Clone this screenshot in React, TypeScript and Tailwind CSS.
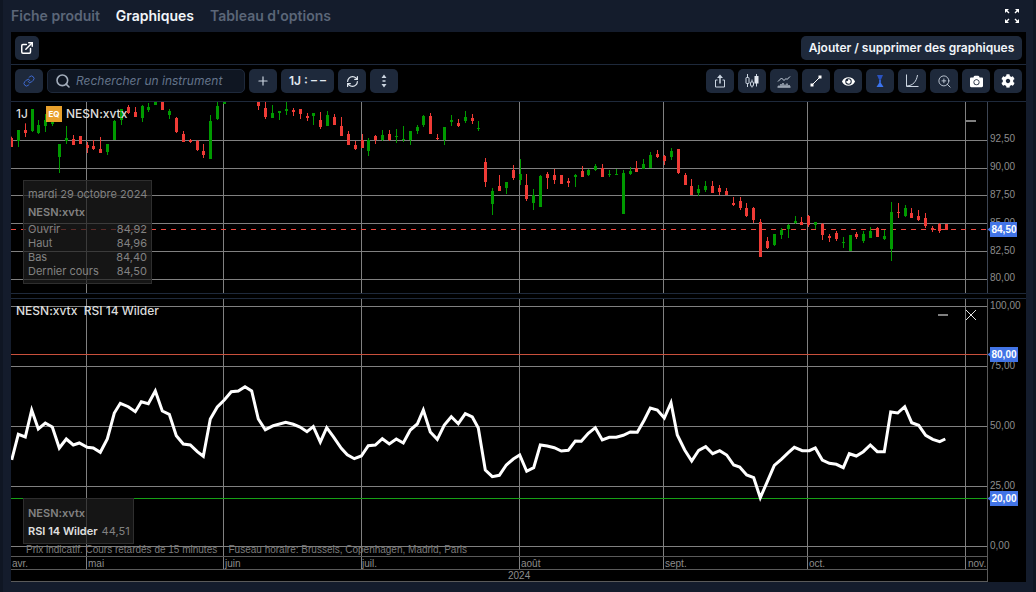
import type { ReactNode } from "react";
import { ExternalLink, Link, Search, Plus, RefreshCw, ZoomIn } from "lucide-react";
import { FaEye, FaCog, FaCamera } from "react-icons/fa";

type C = [number, number, number, number, number, string];
type G = { ox: number; oy: number; items: C[] };

const groups: G[] = [
  { ox: 0, oy: 100, items: [
    [35,110,141,113,141,"r"],[55,90,141,90,123,"g"],[76,70,111,90,99,"r"],[97,27,96,27,93,"g"],[115,60,102,75,99,"g"],[136,42,96,60,78,"g"],[157,57,78,66,72,"g"],[178,132,219,132,171,"g"],[199,78,132,114,123,"g"],[220,105,135,117,135,"r"],[241,108,132,108,132,"r"],[262,126,159,135,144,"r"],[280,120,150,138,147,"r"],[301,111,159,147,159,"r"],[322,132,165,132,156,"g"],[343,60,120,63,120,"g"],[364,27,75,27,60,"g"],[385,15,42,21,39,"r"],[406,21,51,36,51,"r"],[427,15,66,18,54,"g"],[445,9,36,21,30,"g"],[466,6,15,6,15,"g"],[487,6,30,6,30,"r"],[508,27,57,33,45,"g"],[529,51,99,54,96,"r"],[550,93,126,102,126,"r"],[571,117,129,120,126,"r"],[592,120,153,123,150,"r"],[610,132,174,153,165,"r"],[631,45,177,63,177,"g"],[652,6,60,18,57,"g"],[673,6,12,6,12,"g"],[775,6,30,6,18,"r"],
  ]},
  { ox: 260, oy: 95, items: [
    [16,21,72,40,66,"r"],[37,30,69,54,69,"g"],[58,48,75,48,54,"g"],[79,21,60,42,48,"g"],[100,39,63,45,51,"r"],[121,42,72,42,57,"r"],[142,54,78,63,69,"r"],[160,54,90,54,63,"g"],[181,51,102,75,96,"r"],[202,48,93,60,93,"g"],[223,57,90,66,90,"r"],[244,66,123,93,123,"r"],[265,108,150,117,150,"r"],[286,138,165,150,162,"r"],[307,117,159,135,159,"r"],[325,129,183,135,168,"g"],[346,120,147,123,136,"r"],[367,105,138,120,136,"g"],[388,105,138,117,136,"r"],[409,102,144,123,126,"g"],[430,93,141,132,136,"g"],[451,108,150,108,136,"g"],[472,90,117,96,108,"g"],[490,60,96,63,90,"g"],[511,54,117,63,117,"r"],[532,117,135,129,132,"r"],[553,96,150,96,136,"g"],[574,60,93,75,81,"g"],[595,72,96,84,93,"r"],[616,48,84,66,78,"g"],[637,57,87,69,78,"r"],[655,78,108,99,102,"g"],[676,189,276,201,261,"r"],[697,279,360,288,327,"g"],[718,240,288,273,288,"r"],[739,261,297,261,279,"g"],[760,210,255,225,249,"r"],
  ]},
  { ox: 480, oy: 130, items: [
    [121,87,165,132,150,"g"],[139,132,213,165,207,"r"],[160,177,240,195,219,"g"],[181,135,231,138,231,"g"],[202,126,177,132,144,"r"],[223,117,162,135,150,"r"],[244,135,162,135,162,"r"],[265,144,171,153,159,"r"],[286,132,171,135,141,"g"],[307,108,141,123,141,"r"],[325,117,138,120,135,"g"],[346,102,123,108,120,"g"],[367,102,141,114,141,"r"],[388,120,141,132,135,"g"],[409,117,135,132,135,"g"],[430,120,252,129,252,"g"],[451,111,135,123,132,"g"],[469,93,126,114,126,"r"],[490,87,117,102,117,"g"],[511,66,114,75,114,"g"],[532,60,84,72,81,"r"],[553,75,105,78,93,"r"],[574,54,90,63,81,"g"],[595,57,132,57,129,"r"],[616,129,165,135,165,"r"],[634,147,195,168,195,"r"],[655,165,198,177,189,"g"],[676,153,186,168,180,"g"],[697,153,189,168,189,"r"],[718,165,195,174,186,"r"],[739,174,195,183,195,"r"],
  ]},
  { ox: 730, oy: 100, items: [
    [10,291,318,309,315,"r"],[31,291,330,303,324,"r"],[49,309,351,324,348,"r"],[70,321,369,324,360,"r"],[91,357,471,366,471,"r"],[112,411,447,423,444,"r"],[133,402,438,402,435,"g"],[154,384,417,390,405,"g"],[175,372,414,375,387,"g"],[196,348,372,363,369,"g"],[214,351,375,366,375,"r"],[235,345,381,348,375,"r"],[256,366,387,366,375,"g"],[277,369,420,372,405,"r"],[298,402,426,408,414,"r"],[319,393,423,399,417,"r"],[340,411,444,426,429,"g"],[361,405,453,405,453,"g"],[379,396,417,402,411,"r"],[400,393,429,402,423,"g"],[421,381,414,393,414,"g"],[442,381,411,384,411,"r"],[463,390,420,408,417,"g"],[484,306,483,336,447,"g"],[505,309,354,336,339,"r"],[526,315,351,324,348,"g"],[544,324,354,339,354,"r"],[565,330,363,348,360,"r"],[586,339,384,354,378,"r"],[607,378,396,384,390,"r"],[628,369,399,372,393,"r"],[649,372,390,372,390,"r"],
  ]},
];

const rsiA = [[35,495],[55,418],[76,426],[95,345],[115,402],[136,384],[157,396],[178,459],[199,432],[220,450],[238,444],[262,457],[280,459],[301,472],[322,432],[343,354],[361,325],[385,335],[406,350],[424,320],[445,326],[466,288],[487,348],[508,358],[529,422],[550,447],[571,450],[592,470],[610,484],[631,372],[652,336],[673,315],[694,290],[715,288],[735,275],[755,288],[775,372],[796,404],[820,392],[857,382],[880,388],[900,396],[921,410],[940,395],[961,441],[980,398],[1000,425],[1024,460]].map(([x, y]) => [x / 3, 295 + y / 3]);
const rsiB = [[22,224],[43,236],[64,228],[85,197],[106,195],[127,176],[148,192],[169,177],[190,189],[211,150],[232,132],[250,90],[271,156],[292,178],[313,135],[334,110],[355,131],[376,101],[397,111],[415,144],[436,270],[457,290],[478,286],[499,255],[520,237],[539,225],[560,274],[581,263],[601,195],[622,198],[643,203],[664,213],[685,211],[706,183],[724,184],[745,160],[766,143],[787,180],[808,172],[829,172],[850,166],[871,156],[892,157],[913,120],[931,84],[952,90],[973,114],[993,68],[1012,165]].map(([x, y]) => [340 + x / 3, 380 + y / 3]);
const rsiC = [[14,465],[35,498],[56,466],[77,455],[98,476],[119,467],[140,480],[161,510],[179,516],[200,540],[221,548],[241,608],[262,560],[283,511],[304,493],[325,473],[343,457],[367,467],[388,467],[406,459],[427,495],[448,505],[469,508],[490,518],[508,476],[529,483],[550,470],[571,450],[592,470],[613,470],[632,351],[653,354],[674,335],[695,383],[716,391],[737,421],[758,433],[779,440],[796,432]].map(([x, y]) => [680 + x / 3, 295 + y / 3]);
const rsi = [...rsiA, ...rsiB, ...rsiC].map(([x, y]) => `${x.toFixed(1)},${y.toFixed(1)}`).join(" ");

const vx = [86.5, 223.5, 361.5, 519.5, 663.5, 807.5, 965.5];
const GRID = "#808080";

function Candles() {
  return (
    <>
      {groups.flatMap((g, gi) =>
        g.items.map(([xz, wt, wb, bt, bb, c], i) => {
          const xc = g.ox + xz / 3;
          const x = Math.round(xc - 1.5);
          const col = c === "r" ? "#ef3b36" : "#009a00";
          const y1 = Math.round(g.oy + bt / 3);
          const y2 = Math.round(g.oy + bb / 3);
          return (
            <g key={`${gi}-${i}`} fill={col}>
              <rect x={x + 1} y={g.oy + wt / 3} width={1} height={(wb - wt) / 3} />
              <rect x={x} y={y1} width={3} height={Math.max(y2 - y1, 1)} />
            </g>
          );
        })
      )}
    </>
  );
}

function AxisText({ x, y, children, fill = "#8c8c8c", size = 10 }: { x: number; y: number; children: ReactNode; fill?: string; size?: number }) {
  return (
    <text x={x} y={y} fill={fill} fontSize={size} fontFamily="'Liberation Sans', sans-serif">
      {children}
    </text>
  );
}

function Btn({ children, className = "w-7" }: { children?: ReactNode; className?: string }) {
  return <div className={`h-6 rounded-[5px] bg-[#1e293b] flex items-center justify-center shrink-0 ${className}`}>{children}</div>;
}

const Ico = ({ children }: { children: ReactNode }) => (
  <svg width="16" height="16" viewBox="0 0 16 16" fill="none" stroke="#cbd5e1" strokeWidth="1">
    {children}
  </svg>
);

function Tag({ x, y, label, w }: { x: number; y: number; label: string; w: number }) {
  return (
    <g>
      <path d={`M${x} ${y + 5.5}l-2.5 2 2.5 2z`} fill="#4274e6" />
      <rect x={x} y={y} width={w} height={15} fill="#4274e6" />
      <text x={x + 1.5} y={y + 11} fill="#fff" fontSize={10} fontWeight={700} fontFamily="'Liberation Sans', sans-serif">
        {label}
      </text>
    </g>
  );
}

export default function App() {
  return (
    <div className="w-[1036px] h-[592px] bg-[#141c2c] border-x-[3px] border-[#0f1623] pl-2 pr-[7px] flex flex-col [font-family:Inter,sans-serif] overflow-hidden">
      <div className="h-8 shrink-0 flex items-center gap-4 text-sm font-semibold text-[#5b6678]">
        <span>Fiche produit</span>
        <span className="text-[#f1f5f9]">Graphiques</span>
        <span>Tableau d'options</span>
        <div className="ml-auto mr-[6px]">
          <svg width="16" height="16" viewBox="0 0 16 16" fill="none" stroke="#fff" strokeWidth="1.4">
            <path d="M5 5L2.5 2.5M11 5l2.5-2.5M5 11l-2.5 2.5M11 11l2.5 2.5" />
            <path d="M1 1h4L1 5zM15 1h-4l4 4zM1 15h4l-4-4zM15 15h-4l4-4z" fill="#fff" stroke="none" />
          </svg>
        </div>
      </div>

      <div className="h-[550px] shrink-0 bg-black flex flex-col">
        <div className="h-[33px] shrink-0 border-b border-[#1e293b] flex items-center justify-between px-1 pb-[1px]">
          <Btn className="w-6">
            <ExternalLink size={14} color="#fff" strokeWidth={2.5} />
          </Btn>
          <Btn className="w-[221px] text-xs font-semibold text-[#f1f5f9]">Ajouter / supprimer des graphiques</Btn>
        </div>

        <div className="h-[37px] shrink-0 border-b border-[#1e293b] flex items-start pt-1 px-1 gap-1">
          <Btn>
            <Link size={12} color="#3f6ad0" strokeWidth={2} />
          </Btn>
          <div className="w-[198px] h-6 rounded-[5px] bg-[#0f1622] border border-[#1e293b] flex items-center pl-[7px] gap-[5px] shrink-0">
            <Search size={16} color="#a3adbb" strokeWidth={2.4} />
            <span className="text-xs italic text-[#64748b]">Rechercher un instrument</span>
          </div>
          <Btn>
            <Plus size={14} color="#cbd5e1" strokeWidth={2} />
          </Btn>
          <Btn className="w-[53px] text-xs font-semibold text-[#e2e8f0]">1J : – –</Btn>
          <Btn>
            <RefreshCw size={13} color="#e2e8f0" strokeWidth={2.2} />
          </Btn>
          <Btn>
            <svg width="16" height="16" viewBox="0 0 16 16" fill="#cbd5e1">
              <path d="M8 1.500l2.500 3.500h-5zM8 14.500l-2.500-3.500h5zM6.500 7.200h3v1.600h-3z" />
            </svg>
          </Btn>
          <div className="ml-auto flex gap-1">
            <Btn>
              <Ico>
                <path d="M5.500 7H3.500v7h9V7h-2" />
                <path d="M8 10.500V4" strokeWidth="1.500" />
                <path d="M8 1.500L11 5H5z" fill="#cbd5e1" stroke="none" />
              </Ico>
            </Btn>
            <Btn>
              <Ico>
                <path d="M3.500 1v3.500M3.500 10.500V14M8 6.500V9M8 13v1.500M12.500 1v3M12.500 10v3.500" />
                <rect x="2" y="4.500" width="3" height="6" rx=".5" />
                <rect x="6.500" y="9" width="3" height="4" rx=".5" />
                <rect x="11" y="3.500" width="3" height="6.500" fill="#e2e8f0" stroke="#e2e8f0" />
              </Ico>
            </Btn>
            <Btn>
              <Ico>
                <path d="M2 8.500l3.500-3.500 2.500 2.500 2-2 1 1 3-3" />
                <path d="M1.500 14h13" strokeWidth="1.200" />
                <path d="M3 12.500v1M5 11v2.500M7 10v3.500M9 11.500v2M11 10.500v3M13 12v1.500" strokeWidth="1.200" />
              </Ico>
            </Btn>
            <Btn>
              <Ico>
                <path d="M4 12L12 4" stroke="#fff" strokeWidth="1" />
                <rect x="2.500" y="10.500" width="3" height="3" fill="#fff" stroke="none" />
                <rect x="10.500" y="2.500" width="3" height="3" fill="#fff" stroke="none" />
              </Ico>
            </Btn>
            <Btn>
              <FaEye size={13} color="#fff" />
            </Btn>
            <Btn>
              <svg width="16" height="16" viewBox="0 0 16 16">
                <path d="M5 2h6L9 6.500H7z" fill="#2a52c0" />
                <rect x="7" y="6.500" width="2" height="3" fill="#2f5fd0" />
                <path d="M8 8.500L11.500 14h-7z" fill="#3b74ee" />
              </svg>
            </Btn>
            <Btn>
              <Ico>
                <path d="M2.500 1.500V13.500H14.500" />
                <path d="M3 13C9 12.500 12.500 8.500 13.500 2" />
              </Ico>
            </Btn>
            <Btn>
              <ZoomIn size={15} color="#cbd5e1" strokeWidth={1.4} />
            </Btn>
            <Btn>
              <FaCamera size={13} color="#fff" />
            </Btn>
            <Btn>
              <FaCog size={14} color="#fff" />
            </Btn>
          </div>
        </div>

        <div className="relative h-[192px] shrink-0 border-b border-[#1e293b]">
          <svg className="block" width="1015" height="191" viewBox="11 102 1015 191">
            {[140.5, 168.5, 195.5, 223.5, 251.5, 279.5].map((y) => (
              <line key={y} x1={11} x2={987} y1={y} y2={y} stroke={GRID} />
            ))}
            {vx.map((x) => (
              <line key={x} x1={x} x2={x} y1={102} y2={293} stroke={GRID} />
            ))}
            <line x1={987.5} x2={987.5} y1={102} y2={293} stroke="#3d4553" />
            <line x1={11} x2={987} y1={229.5} y2={229.5} stroke="#ef4a40" strokeDasharray="5 5" />
            <Candles />
            <AxisText x={990} y={142}>92,50</AxisText>
            <AxisText x={990} y={170}>90,00</AxisText>
            <AxisText x={990} y={198}>87,50</AxisText>
            <AxisText x={990} y={226}>85,00</AxisText>
            <AxisText x={990} y={254}>82,50</AxisText>
            <AxisText x={990} y={281}>80,00</AxisText>
            <Tag x={990} y={222} w={27} label="84,50" />
          </svg>

          <div className="absolute left-[5px] top-[4px] flex items-center text-xs font-medium text-[#dcdcdc] leading-4">
            <span className="w-[30px]">1J</span>
            <span className="w-4 h-4 bg-[#e8a02c] text-white text-[8px] font-bold flex items-center justify-center mr-1">EQ</span>
            <span>NESN:xvtx</span>
          </div>
          <div className="absolute left-[955px] top-[18px] w-[10px] h-[2px] bg-[#808080]" />

          <div className="absolute left-3 top-[78px] w-[129px] h-[104px] bg-[#1e1e1e]/70 border border-[#2e2e2e] px-1 pt-[6px] text-[11px] leading-[14px] text-[#828282] whitespace-nowrap">
            <div>mardi 29 octobre 2024</div>
            <div className="mt-[4px] font-semibold">NESN:xvtx</div>
            <div className="mt-[3px] flex justify-between"><span>Ouvrir</span><span>84,92</span></div>
            <div className="flex justify-between"><span>Haut</span><span>84,96</span></div>
            <div className="flex justify-between"><span>Bas</span><span>84,40</span></div>
            <div className="flex justify-between"><span>Dernier cours</span><span>84,50</span></div>
          </div>
        </div>

        <div className="h-[5px] shrink-0 border-b border-[#1e293b]" />

        <div className="relative h-[283px] shrink-0">
          <svg className="block" width="1015" height="283" viewBox="11 299 1015 283">
            {[306.5, 366.5, 426.5, 486.5, 546.5].map((y) => (
              <line key={y} x1={11} x2={987} y1={y} y2={y} stroke={GRID} />
            ))}
            {vx.map((x) => (
              <line key={x} x1={x} x2={x} y1={299} y2={569} stroke={GRID} />
            ))}
            <line x1={11} x2={987} y1={556.5} y2={556.5} stroke="#5a5a5a" />
            <line x1={11} x2={987} y1={569.5} y2={569.5} stroke="#5a5a5a" />
            <line x1={11} x2={987} y1={581.5} y2={581.5} stroke="#5a5a5a" />
            <line x1={987.5} x2={987.5} y1={299} y2={582} stroke="#5a5a5a" />
            <line x1={11} x2={987} y1={354.5} y2={354.5} stroke="#c9503c" />
            <line x1={11} x2={987} y1={498.5} y2={498.5} stroke="#16a016" />
            <polyline points={rsi} fill="none" stroke="#fff" strokeWidth={3} strokeLinejoin="miter" />
            <AxisText x={990} y={309}>100,00</AxisText>
            <AxisText x={990} y={369}>75,00</AxisText>
            <AxisText x={990} y={429}>50,00</AxisText>
            <AxisText x={990} y={489}>25,00</AxisText>
            <AxisText x={990} y={549}>0,00</AxisText>
            <Tag x={990} y={347} w={28} label="80,00" />
            <Tag x={990} y={491} w={28} label="20,00" />
            <AxisText x={26} y={553} fill="#7d7d7d">Prix indicatif. Cours retardés de 15 minutes</AxisText>
            <AxisText x={228.5} y={553} fill="#7d7d7d">Fuseau horaire: Brussels, Copenhagen, Madrid, Paris</AxisText>
            <AxisText x={12} y={566.5}>avr.</AxisText>
            <AxisText x={88} y={566.5}>mai</AxisText>
            <AxisText x={225} y={566.5}>juin</AxisText>
            <AxisText x={362} y={566.5}>juil.</AxisText>
            <AxisText x={521} y={566.5}>août</AxisText>
            <AxisText x={665} y={566.5}>sept.</AxisText>
            <AxisText x={809} y={566.5}>oct.</AxisText>
            <AxisText x={968} y={566.5}>nov.</AxisText>
            <AxisText x={508} y={579}>2024</AxisText>
            <line x1={938} x2={948} y1={315} y2={315} stroke="#808080" strokeWidth={2} />
            <path d="M966 310l10 10M976 310l-10 10" stroke="#e5e5e5" strokeWidth={1} fill="none" />
          </svg>

          <div className="absolute left-[5px] top-[4px] text-xs font-medium leading-4 text-[#dcdcdc] whitespace-pre">NESN:xvtx  RSI 14 Wilder</div>

          <div className="absolute left-3 top-[199px] w-[111px] h-[46px] bg-[#1e1e1e]/70 border border-[#2e2e2e] px-1 pt-[7px] text-[11px] leading-[14px] whitespace-nowrap">
            <div className="font-semibold text-[#828282]">NESN:xvtx</div>
            <div className="mt-1">
              <span className="font-semibold text-[#e0e0e0]">RSI 14 Wilder</span>
              <span className="ml-1 text-[#828282]">44,51</span>
            </div>
          </div>
        </div>
      </div>
    </div>
  );
}
